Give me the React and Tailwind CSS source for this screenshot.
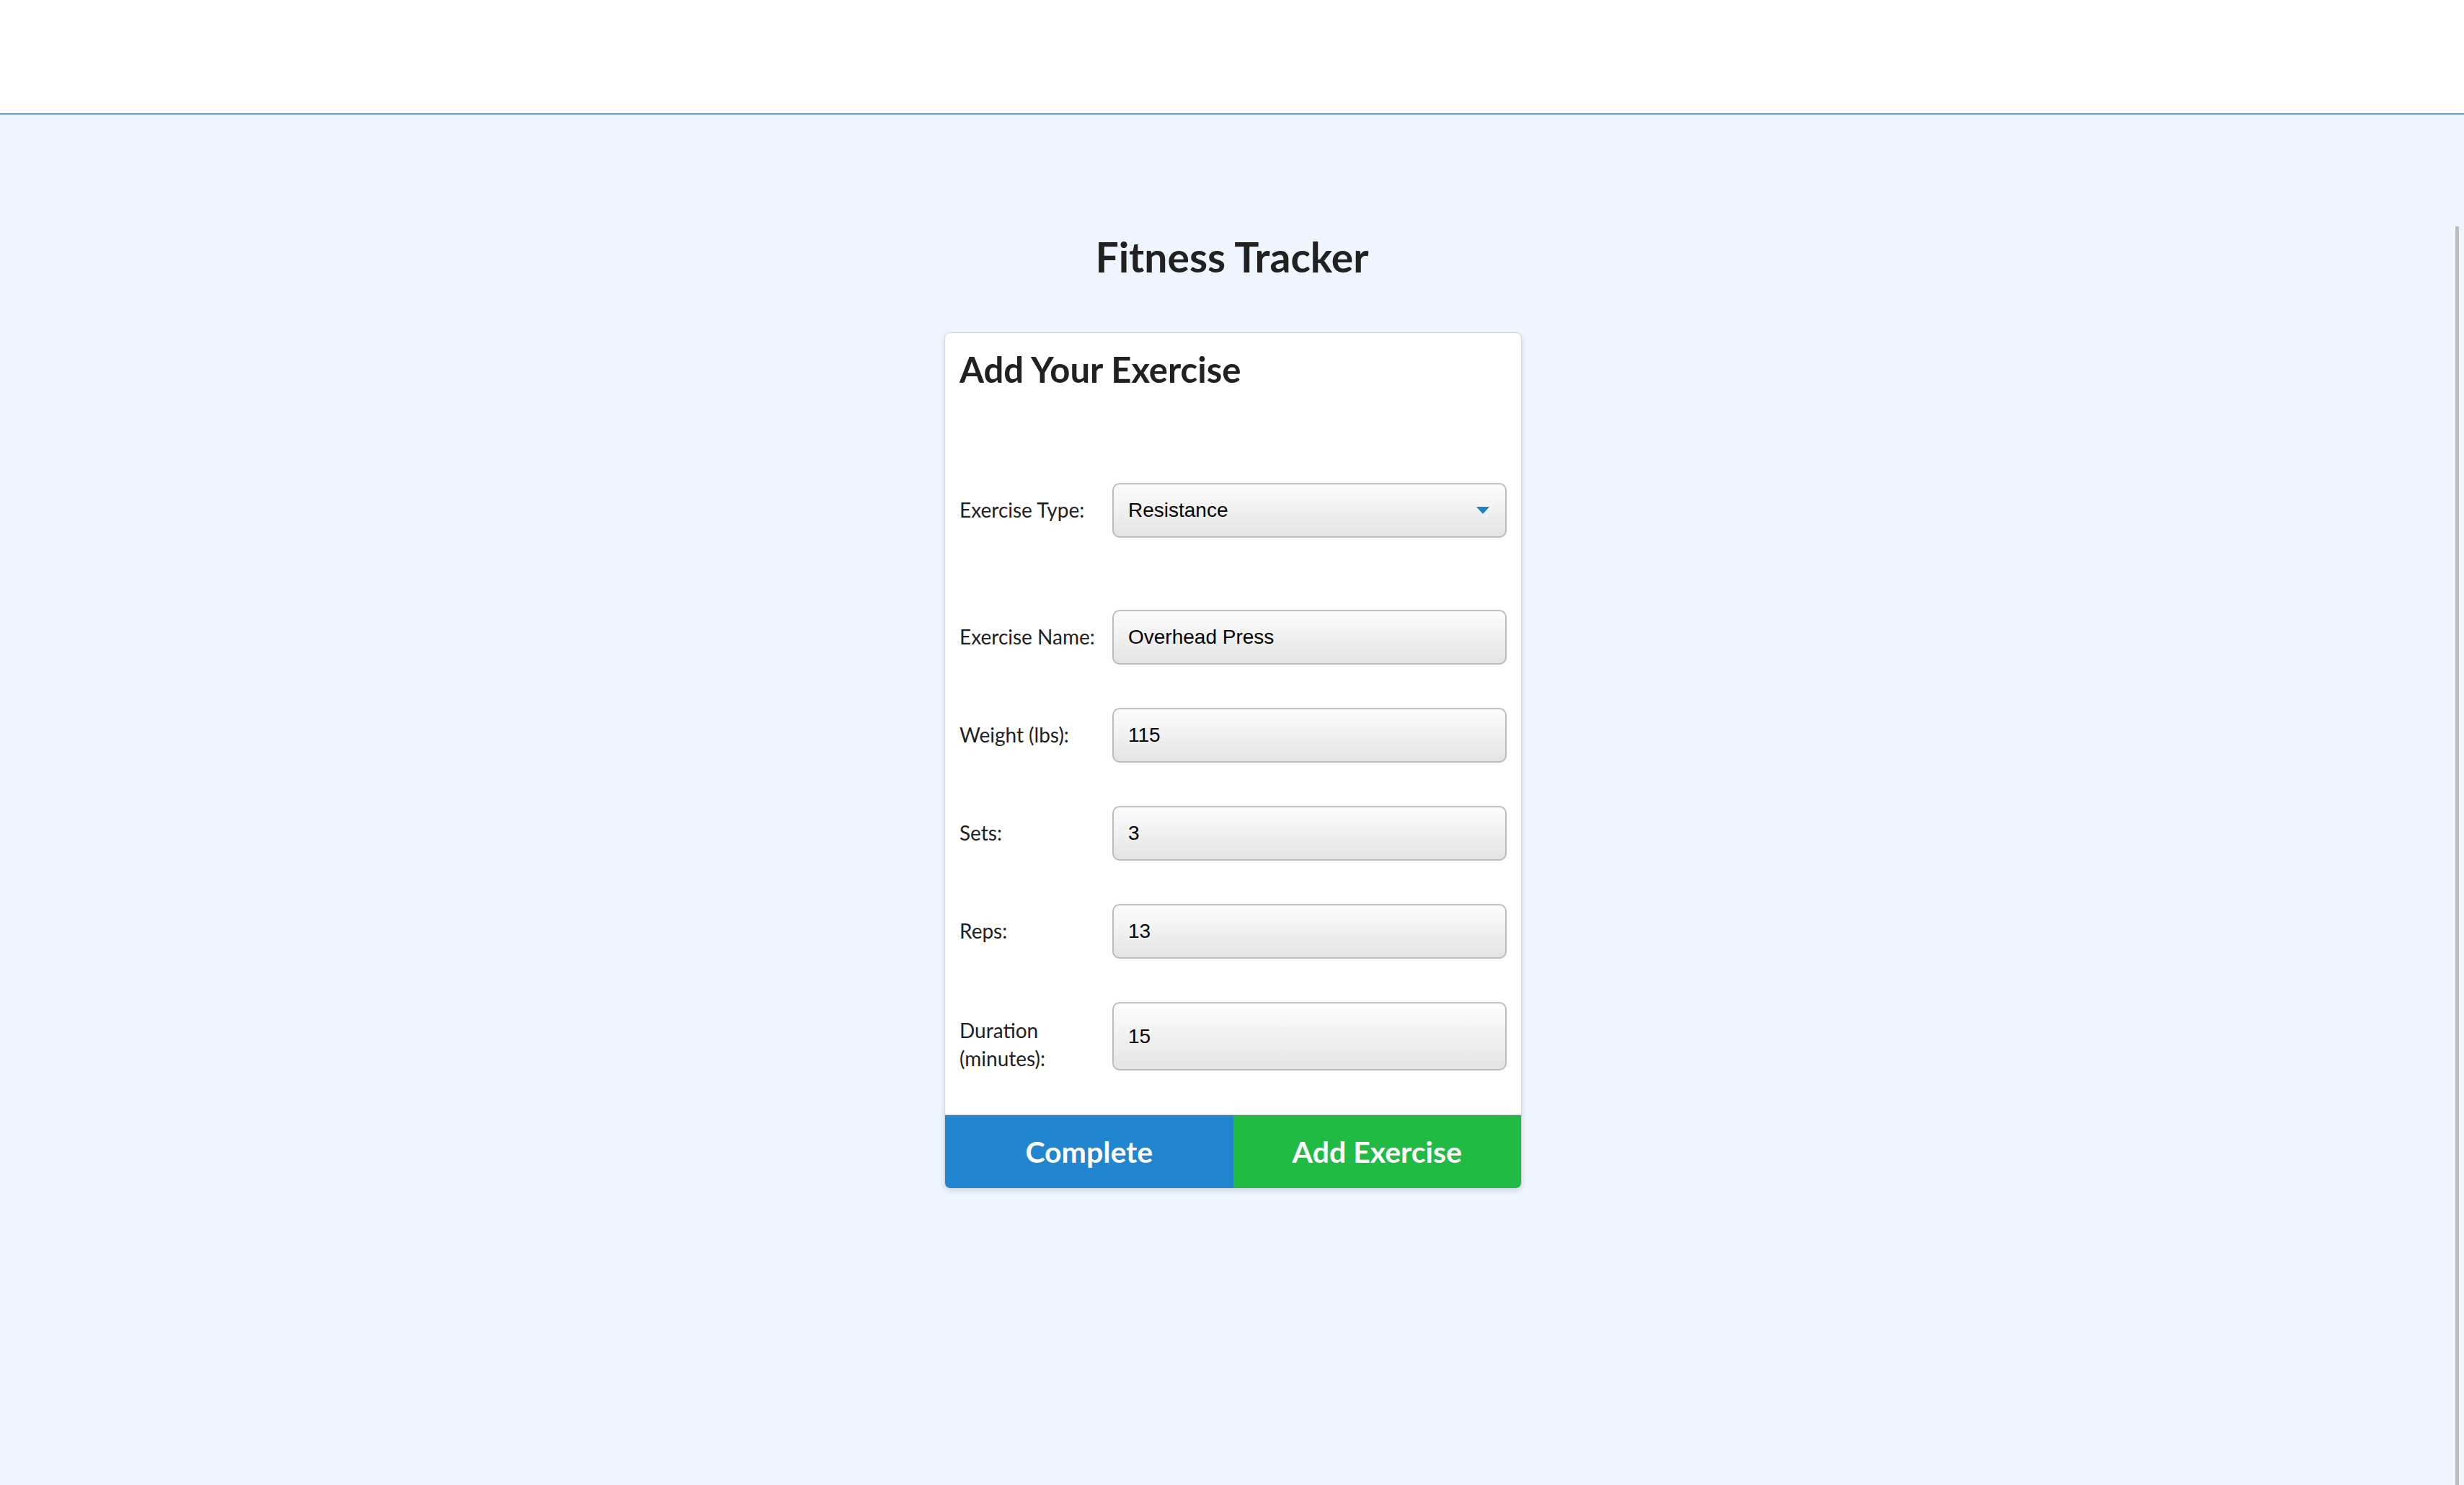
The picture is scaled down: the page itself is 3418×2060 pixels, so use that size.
import React from "react";

const fields = [
  { label: "Exercise Name:", value: "Overhead Press" },
  { label: "Weight (lbs):", value: "115" },
  { label: "Sets:", value: "3" },
  { label: "Reps:", value: "13" },
];

function Field({ label, value, tall }) {
  return (
    <div className="flex items-center">
      <label
        className={`w-[212px] shrink-0 text-[28px] leading-[1.4] text-[#212121] pr-4 ${tall ? "self-end -mb-[3px]" : ""}`}
      >
        {label}
      </label>
      <div
        className={`flex-1 flex items-center ${tall ? "h-[95px]" : "h-[76px]"} pl-[20px] pr-4 border-2 border-[#bdbdbd] rounded-[10px] bg-linear-to-b from-[#fdfdfd] to-[#e4e4e4] font-['Liberation_Sans',Arial,sans-serif] text-[28px] text-black`}
      >
        {value}
      </div>
    </div>
  );
}

export default function App() {
  return (
    <div className="min-h-screen bg-[#eff6ff] relative font-['Lato','Noto_Sans',sans-serif]">
      {/* top bar */}
      <div className="h-[159px] bg-white border-b-2 border-[#5e9df8]" />

      <div className="flex flex-col items-center">
        <h1 className="mt-[169px] text-[57px] leading-none font-bold text-[#212121]">Fitness Tracker</h1>

        <div className="mt-[76px] ml-[3px] w-[801px] bg-white border border-[#d4d4d5] rounded-[8px] shadow-[0_3px_8px_rgba(0,0,0,0.12)] overflow-hidden">
          <div className="px-[20px] pt-[26px] pb-[61px]">
            <h2 className="text-[49px] leading-none font-bold text-[#212121]">Add Your Exercise</h2>

            {/* exercise type select */}
            <div className="mt-[133px] flex items-center">
              <label className="w-[212px] shrink-0 text-[28px] leading-[1.4] text-[#212121]">Exercise Type:</label>
              <div className="flex-1 flex items-center justify-between h-[76px] pl-[20px] pr-[22px] border-2 border-[#bdbdbd] rounded-[10px] bg-linear-to-b from-[#fdfdfd] to-[#e4e4e4] font-['Liberation_Sans',Arial,sans-serif] text-[28px] text-black">
                <span>Resistance</span>
                <svg width="18" height="10" viewBox="0 0 18 10">
                  <polygon points="0,0 18,0 9,10" fill="#1a84c4" />
                </svg>
              </div>
            </div>

            <div className="mt-[100px] flex flex-col gap-[60px]">
              {fields.map((f) => (
                <Field key={f.label} label={f.label} value={f.value} />
              ))}
              <Field label="Duration (minutes):" value="15" tall />
            </div>
          </div>

          <div className="flex h-[102px] border-t border-[#d4d4d5]">
            <button className="flex-1 bg-[#2185d0] text-white text-[41px] font-bold">Complete</button>
            <button className="flex-1 bg-[#21ba45] text-white text-[41px] font-bold">Add Exercise</button>
          </div>
        </div>
      </div>

      {/* scroll track on the right */}
      <div className="absolute right-[7px] top-[314px] bottom-0 w-[5px] bg-[#bdbdbd]" />
    </div>
  );
}
